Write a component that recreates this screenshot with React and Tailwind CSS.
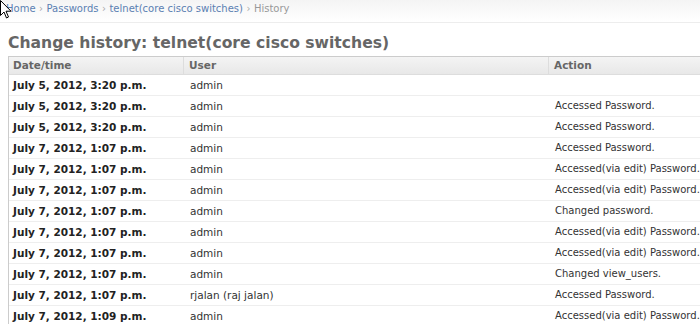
import React from 'react';

const rows = [
  ['July 5, 2012, 3:20 p.m.', 'admin', ''],
  ['July 5, 2012, 3:20 p.m.', 'admin', 'Accessed Password.'],
  ['July 5, 2012, 3:20 p.m.', 'admin', 'Accessed Password.'],
  ['July 7, 2012, 1:07 p.m.', 'admin', 'Accessed Password.'],
  ['July 7, 2012, 1:07 p.m.', 'admin', 'Accessed(via edit) Password.'],
  ['July 7, 2012, 1:07 p.m.', 'admin', 'Accessed(via edit) Password.'],
  ['July 7, 2012, 1:07 p.m.', 'admin', 'Changed password.'],
  ['July 7, 2012, 1:07 p.m.', 'admin', 'Accessed(via edit) Password.'],
  ['July 7, 2012, 1:07 p.m.', 'admin', 'Accessed(via edit) Password.'],
  ['July 7, 2012, 1:07 p.m.', 'admin', 'Changed view_users.'],
  ['July 7, 2012, 1:07 p.m.', 'rjalan (raj jalan)', 'Accessed Password.'],
  ['July 7, 2012, 1:09 p.m.', 'admin', 'Accessed(via edit) Password.'],
];

const Cursor = () => (
  <svg className="absolute left-0 top-0" width="12" height="19" viewBox="0 0 12 19">
    <path d="M0.5 0.5 L0.5 15.5 L4 12 L6.5 18 L8.5 17 L6 11.2 L11 11.2 Z" fill="#fff" stroke="#000" strokeWidth="1" />
  </svg>
);

export default function App() {
  return (
    <div className="relative w-[700px] h-[324px] overflow-hidden bg-white text-[#333]" style={{ fontFamily: '"DejaVu Sans", Verdana, sans-serif' }}>
      {/* breadcrumbs */}
      <div className="h-[23px] pl-[6px] pt-[1px] text-[10px] leading-[15px] bg-gradient-to-b from-[#f4f4f4] to-white border-b border-[#ededed] text-[#999]">
        <span className="text-[#5b80b2]">Home</span>
        <span className="mx-[3.5px] text-[#aaa]">›</span>
        <span className="text-[#5b80b2]">Passwords</span>
        <span className="mx-[3.5px] text-[#aaa]">›</span>
        <span className="text-[#5b80b2]">telnet(core cisco switches)</span>
        <span className="mx-[3.5px] text-[#aaa]">›</span>
        <span>History</span>
      </div>
      <Cursor />

      <h1 className="pl-[8px] pt-[10px] h-[33px] text-[15.6px] leading-[20px] font-bold text-[#666]">
        Change history: telnet(core cisco switches)
      </h1>

      <div className="ml-[8px] w-[720px] border border-[#ccc]">
        <div className="flex h-[18px] bg-gradient-to-b from-[#f4f4f4] to-[#e8e8e8] border-b border-[#ddd] text-[10.5px] leading-[17px] font-bold text-[#666]">
          <div className="w-[175px] pl-[4px] border-r border-[#ddd]">Date/time</div>
          <div className="w-[365px] pl-[5px] border-r border-[#ddd]">User</div>
          <div className="flex-1 pl-[5px]">Action</div>
        </div>
        {rows.map((r, i) => (
          <div key={i} className="flex h-[21px] border-b border-[#eee] text-[10.5px] leading-[20px]">
            <div className="w-[175px] pl-[4px] font-bold text-[#222]">{r[0]}</div>
            <div className="w-[365px] pl-[6px] text-[#333]">{r[1]}</div>
            <div className="flex-1 pl-[6px] text-[#333] text-[10px] whitespace-nowrap">{r[2]}</div>
          </div>
        ))}
      </div>
    </div>
  );
}
